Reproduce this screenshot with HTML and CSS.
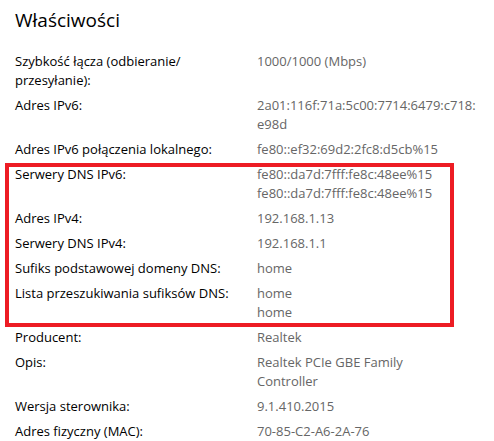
FILE: index.html
```html
<!DOCTYPE html>
<html lang="pl">
<head>
<meta charset="utf-8">
<title>Właściwości</title>
<link rel="stylesheet" href="styles.css">
</head>
<body>
<main class="page">
  <h1 class="title">Właściwości</h1>
  <dl class="props">
    <dt>Szybkość łącza (odbieranie/ przesyłanie):</dt>
    <dd>1000/1000 (Mbps)</dd>
    <dt>Adres IPv6:</dt>
    <dd>2a01:116f:71a:5c00:7714:6479:c718:<br>e98d</dd>
    <dt>Adres IPv6 połączenia lokalnego:</dt>
    <dd>fe80::ef32:69d2:2fc8:d5cb%15</dd>
    <dt>Serwery DNS IPv6:</dt>
    <dd>fe80::da7d:7fff:fe8c:48ee%15<br>fe80::da7d:7fff:fe8c:48ee%15</dd>
    <dt>Adres IPv4:</dt>
    <dd>192.168.1.13</dd>
    <dt>Serwery DNS IPv4:</dt>
    <dd>192.168.1.1</dd>
    <dt>Sufiks podstawowej domeny DNS:</dt>
    <dd>home</dd>
    <dt>Lista przeszukiwania sufiksów DNS:</dt>
    <dd>home<br>home</dd>
    <dt>Producent:</dt>
    <dd>Realtek</dd>
    <dt>Opis:</dt>
    <dd>Realtek PCIe GBE Family<br>Controller</dd>
    <dt>Wersja sterownika:</dt>
    <dd>9.1.410.2015</dd>
    <dt>Adres fizyczny (MAC):</dt>
    <dd>70-85-C2-A6-2A-76</dd>
  </dl>
  <div class="highlight" aria-hidden="true"></div>
</main>
</body>
</html>
```

FILE: styles.css
```css
html, body {
  margin: 0;
  padding: 0;
  background: #ffffff;
}

body {
  font-family: "Open Sans", "Noto Sans", sans-serif;
  color: #000000;
}

.page {
  position: relative;
  width: 494px;
  height: 441px;
  overflow: hidden;
  padding: 6px 0 0 15px;
  box-sizing: border-box;
}

.title {
  margin: 0 0 18px 0;
  font-size: 19px;
  line-height: 28px;
  font-weight: 400;
  color: #000000;
}

.props {
  display: grid;
  grid-template-columns: 242px 1fr;
  row-gap: 6px;
  margin: 0;
  font-size: 13px;
  line-height: 19px;
}

.props dt {
  margin: 0;
  color: #000000;
  padding-right: 8px;
}

.props dd {
  margin: 0;
  color: #666666;
  white-space: nowrap;
}

.highlight {
  position: absolute;
  left: 5px;
  top: 163px;
  width: 449px;
  height: 164px;
  border: 4px solid #ed1c24;
  box-sizing: border-box;
  pointer-events: none;
}
```
